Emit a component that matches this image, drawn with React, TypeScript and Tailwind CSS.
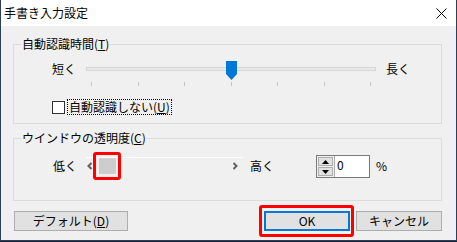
import React from "react";

const ticks = [11, 58, 104, 151, 197, 244, 290];

function TimeSlider() {
	return (
		<svg width="300" height="26" viewBox="0 0 300 26" className="block shrink-0">
			<rect x="6.5" y="7.5" width="289" height="3" fill="#e7eae8" stroke="#d6d6d6" />
			{ticks.map((x) => (
				<line key={x} x1={x + 0.5} x2={x + 0.5} y1="22" y2="26" stroke="#c4c4c4" />
			))}
			<polygon points="146,1 157,1 157,14 151.5,20 146,14" fill="#0078d7" />
		</svg>
	);
}

function Chevron({ dir }: { dir: "left" | "right" }) {
	return (
		<svg width="6" height="8" viewBox="0 0 6 8" className="block">
			{dir === "left" ? (
				<polyline points="4.5,1 1.5,4 4.5,7" fill="none" stroke="#606060" strokeWidth="2" />
			) : (
				<polyline points="1.5,1 4.5,4 1.5,7" fill="none" stroke="#606060" strokeWidth="2" />
			)}
		</svg>
	);
}

function SpinBox() {
	return (
		<div className="flex w-[54px] h-[23px] border border-[#7a7a7a] bg-white">
			<div className="flex flex-col w-[18px] bg-[#f0f0f0] border-r border-[#adadad] p-[1px] gap-[1px]">
				<div className="flex-1 flex items-center justify-center bg-[#e1e1e1] border border-[#adadad]">
					<svg width="7" height="4" viewBox="0 0 7 4">
						<polygon points="0,4 7,4 3.5,0" fill="#000" />
					</svg>
				</div>
				<div className="flex-1 flex items-center justify-center bg-[#e1e1e1] border border-[#adadad]">
					<svg width="7" height="4" viewBox="0 0 7 4">
						<polygon points="0,0 7,0 3.5,4" fill="#000" />
					</svg>
				</div>
			</div>
			<span className="pl-[2px] pt-[2px] text-[12px] leading-[14px]">0</span>
		</div>
	);
}

export default function App() {
	return (
		<div className="w-[457px] h-[242px] bg-[#1c2733] font-['Noto_Sans_CJK_JP','Noto_Sans',sans-serif] text-[12px] text-black">
			<div className="w-[457px] h-[241px] flex flex-col border-l border-r border-b border-[#2b4058]">
				{/* Title bar */}
				<div className="h-[26px] shrink-0 bg-white flex items-center justify-between pl-[3px] pr-[9px]">
					<span className="leading-[16px]">手書き入力設定</span>
					<svg width="11" height="11" viewBox="0 0 11 11">
						<line x1="0.5" y1="0.5" x2="10.5" y2="10.5" stroke="#000" />
						<line x1="10.5" y1="0.5" x2="0.5" y2="10.5" stroke="#000" />
					</svg>
				</div>

				{/* Body */}
				<div className="flex-1 bg-[#f0f0f0] pl-[12px] pr-[14px] pt-[10px]">
					<fieldset className="border border-[#dcdcdc] pt-[8px] pb-[8px]">
						<legend className="ml-[7px] px-[1px] leading-[16px]">
							自動認識時間(<span className="underline">T</span>)
						</legend>
						<div className="pl-[38px]">
							<div className="flex items-start">
								<span className="w-[28px] mt-[1px] leading-[16px]">短く</span>
								<TimeSlider />
								<span className="ml-[6px] mt-[1px] leading-[16px]">長く</span>
							</div>
							<div className="flex items-center mt-[13px]">
								<div className="w-[13px] h-[13px] border border-[#333333] bg-white mt-[1px]" />
								<span className="ml-[2px] border border-dotted border-black px-[1px] leading-[14px]">
									自動認識しない(<span className="underline">U</span>)
								</span>
							</div>
						</div>
					</fieldset>

					<fieldset className="mt-[6px] border border-[#dcdcdc] pt-[9px] pb-[22px]">
						<legend className="ml-[7px] px-[1px] leading-[16px]">
							ウインドウの透明度(<span className="underline">C</span>)
						</legend>
						<div className="pl-[38px] flex items-start h-[23px]">
							<span className="w-[34px] mt-[3px] leading-[16px] pl-[1px]">低く</span>
							<div className="mt-[2px] w-[157px] h-[17px] border-t border-white flex items-center">
								<div className="w-[13px] flex justify-start pl-[1px]">
									<Chevron dir="left" />
								</div>
								<div className="relative w-[17px] h-[16px] bg-[#cdcdcd]">
									<div className="absolute left-[-6px] top-[-6px] w-[28px] h-[28px] border-[3px] border-[#ff0000] rounded-[3px]" />
								</div>
								<div className="flex-1" />
								<div className="w-[13px] flex justify-start pl-[2px]">
									<Chevron dir="right" />
								</div>
							</div>
							<span className="ml-[7px] mt-[3px] leading-[16px]">高く</span>
							<div className="ml-[42px]">
								<SpinBox />
							</div>
							<span className="ml-[6px] mt-[3px] leading-[16px]">%</span>
						</div>
					</fieldset>

					<div className="mt-[10px] flex items-center">
						<button className="ml-[1px] w-[114px] h-[20px] bg-[#e1e1e1] border border-[#adadad] leading-[16px]">
							デフォルト(<span className="underline">D</span>)
						</button>
						<div className="flex-1" />
						<div className="relative">
							<button className="w-[86px] h-[20px] bg-[#e1e1e1] border-2 border-[#0078d7] leading-[16px]">
								OK
							</button>
							<div className="absolute left-[-5px] top-[-6px] w-[95px] h-[32px] border-[3px] border-[#ff0000] rounded-[3px]" />
						</div>
						<button className="ml-[6px] w-[86px] h-[20px] bg-[#e1e1e1] border border-[#adadad] leading-[16px]">
							キャンセル
						</button>
					</div>
				</div>
			</div>
		</div>
	);
}
